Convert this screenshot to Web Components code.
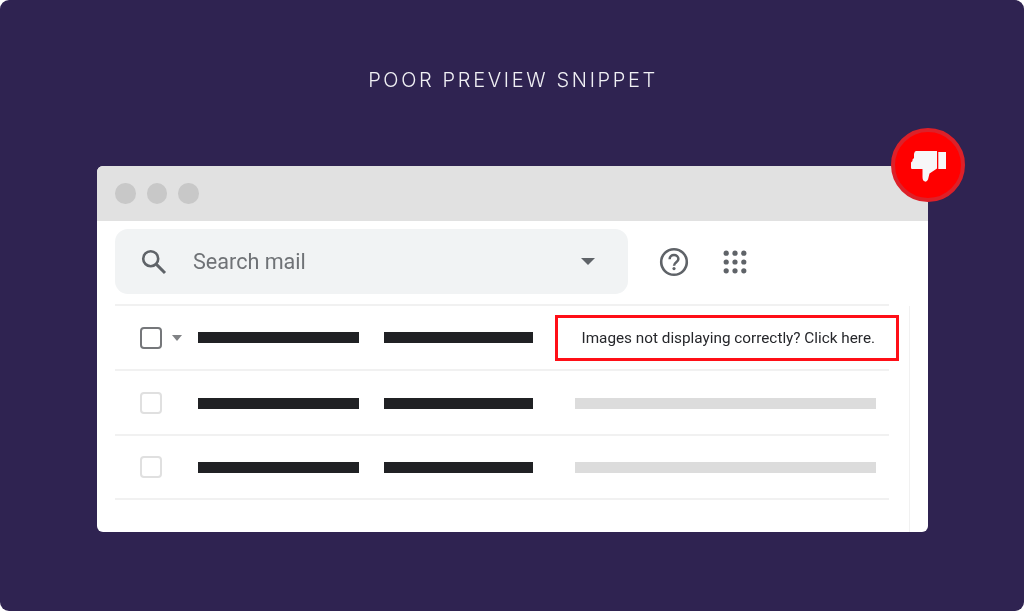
<!DOCTYPE html>
<html><head><meta charset="utf-8"><title>Poor preview snippet</title>
<style>html,body{margin:0;padding:0;background:#fff;width:1024px;height:611px;overflow:hidden}</style>
</head><body>
<preview-stage heading="POOR PREVIEW SNIPPET">
  <mail-window>
    <mail-toolbar></mail-toolbar>
    <mail-list>
      <mail-row active><span slot="snippet">Images not displaying correctly? Click here.</span></mail-row>
      <mail-row></mail-row>
      <mail-row></mail-row>
    </mail-list>
  </mail-window>
</preview-stage>
<script>
function def(name, html, init){
  customElements.define(name, class extends HTMLElement{
    connectedCallback(){
      if(this.shadowRoot) return;
      const r=this.attachShadow({mode:'open'});
      r.innerHTML=html;
      if(init) init(this,r);
    }
  });
}
def('preview-stage',`<style>
:host{display:flex;flex-direction:column;width:1024px;height:611px;box-sizing:border-box;background:#2f2351;border-radius:9px;padding:68px 96px 0 97px;font-family:"Inter",sans-serif;filter:blur(.35px)}
h1{margin:0;height:98px;padding-left:1px;font:300 20px/24px "Inter",sans-serif;letter-spacing:2.65px;color:#f0f0f4;text-align:center}
.wrap{position:relative;width:831px;height:366px}
.badge{position:absolute;left:794px;top:-38px;width:74px;height:74px;box-sizing:border-box;border-radius:50%;background:#f00;border:4px solid #dd2028;display:flex;align-items:center;justify-content:center}
svg{display:block;margin-top:3px}
</style><h1></h1><div class="wrap"><slot></slot><div class="badge">
<svg width="35" height="31" viewBox="0 0 35 31"><path fill="#f7f7f8" d="M5 0H26V17.5L18.5 22.5L17 28.5Q16 31 14 30.6Q11.5 30 11.5 26V18H1Q0 18 0 16.5V11.5L1.5 10V8.5L3 7V3Q3.5 0 5 0Z"/><path fill="#f7f7f8" d="M27.3 1H35V18H27.3Z"/></svg>
</div></div>`,(h,r)=>{r.querySelector('h1').textContent=h.getAttribute('heading')});
def('mail-window',`<style>
:host{display:flex;flex-direction:column;height:100%;background:#fff;border-radius:6px;overflow:hidden}
.bar{flex:none;height:55px;background:#e1e1e1;display:flex;align-items:center;gap:11px;padding-left:18px}
.bar i{width:20.5px;height:20.5px;border-radius:50%;background:#c8c8c8}
.body{flex:1;position:relative;min-height:0}
</style><div class="bar"><i></i><i></i><i></i></div><div class="body"><slot></slot></div>`);
def('mail-toolbar',`<style>
:host{display:flex;align-items:center;height:83px;box-sizing:border-box;padding:8px 0 10px 18px}
.search{width:513px;height:65px;box-sizing:border-box;border-radius:13px;background:#f1f3f4;display:flex;align-items:center;padding-left:25px;color:#5f6368}
.q{margin-right:25px}
.t{flex:1;font:400 21.6px/26px "Roboto",sans-serif;color:#6f7276}
.caret{width:0;height:0;border:7.5px solid transparent;border-top:7.5px solid #5f6368;border-bottom:0;margin-right:33px}
.help{margin-left:31px}
.apps{margin-left:34px}
svg{display:block}
</style>
<div class="search">
<svg class="q" width="28" height="28" viewBox="0 0 28 28" fill="none" stroke="#5f6368"><circle cx="10.7" cy="10.7" r="7.5" stroke-width="2.6"/><path d="M16.4 16.4 25 25" stroke-width="3"/></svg>
<div class="t">Search mail</div><div class="caret"></div></div>
<svg class="help" width="30" height="30" viewBox="0 0 30 30" fill="none"><circle cx="15" cy="15" r="12.8" stroke="#5f6368" stroke-width="2.6"/><path d="M10.6 12.2C10.6 9.6 12.6 8 15 8s4.4 1.6 4.4 4c0 3.2-4.4 3.4-4.4 6.8" stroke="#5f6368" stroke-width="2.5"/><circle cx="15" cy="21.6" r="1.6" fill="#5f6368"/></svg>
<svg class="apps" width="24" height="24" viewBox="0 0 24 24" fill="#5f6368"><circle cx="3.2" cy="3.2" r="2.6"/><circle cx="12" cy="3.2" r="2.6"/><circle cx="20.8" cy="3.2" r="2.6"/><circle cx="3.2" cy="12" r="2.6"/><circle cx="12" cy="12" r="2.6"/><circle cx="20.8" cy="12" r="2.6"/><circle cx="3.2" cy="20.8" r="2.6"/><circle cx="12" cy="20.8" r="2.6"/><circle cx="20.8" cy="20.8" r="2.6"/></svg>`);
def('mail-list',`<style>
:host{display:block;margin-left:18px;width:774px;border-top:2px solid #f1f1f1;position:relative}
.v{position:absolute;left:794px;top:0;height:240px;width:1px;background:#f1f1f1}
</style><slot></slot><div class="v"></div>`);
def('mail-row',`<style>
:host{display:grid;grid-template-columns:22px 36px 161px 174px 1fr;box-sizing:border-box;height:65px;border-bottom:2px solid #f1f1f1;align-items:center;padding-left:25px;position:relative}
:host(:last-child){height:64px}
.cb{width:22px;height:22px;box-sizing:border-box;border:2.5px solid #e0e0e0;border-radius:4px}
:host([active]) .cb{border-color:#75777a;border-width:2.8px}
.c{width:0;height:0;border:5.5px solid transparent;border-top:6px solid #808285;border-bottom:0;margin-left:10px;visibility:hidden}
:host([active]) .c{visibility:visible}
.b{height:11px;background:#202124;margin-top:2px}
:host([active]) .b{margin-top:0}
:host(:last-child) .b{margin-top:0}
.b2{width:149px;margin-left:25px}
.b1{width:161px}
.g{height:11px;width:301px;margin:2px 0 0 42px;background:#dcdcdc}
:host(:last-child) .g{margin-top:0}
:host([active]) .g{display:none}
.box{display:none;position:absolute;left:440px;top:9px;width:344px;height:46px;box-sizing:border-box;border:3.5px solid #ff0f17;background:#fff;align-items:center;padding-left:23.5px;font:400 15.3px/20px "Roboto",sans-serif;color:#26272b;white-space:nowrap}
:host([active]) .box{display:flex}
</style><div class="cb"></div><div class="c"></div><div class="b b1"></div><div class="b b2"></div><div class="g"></div><div class="box"><slot name="snippet"></slot></div>`);
</script>
</body></html>
